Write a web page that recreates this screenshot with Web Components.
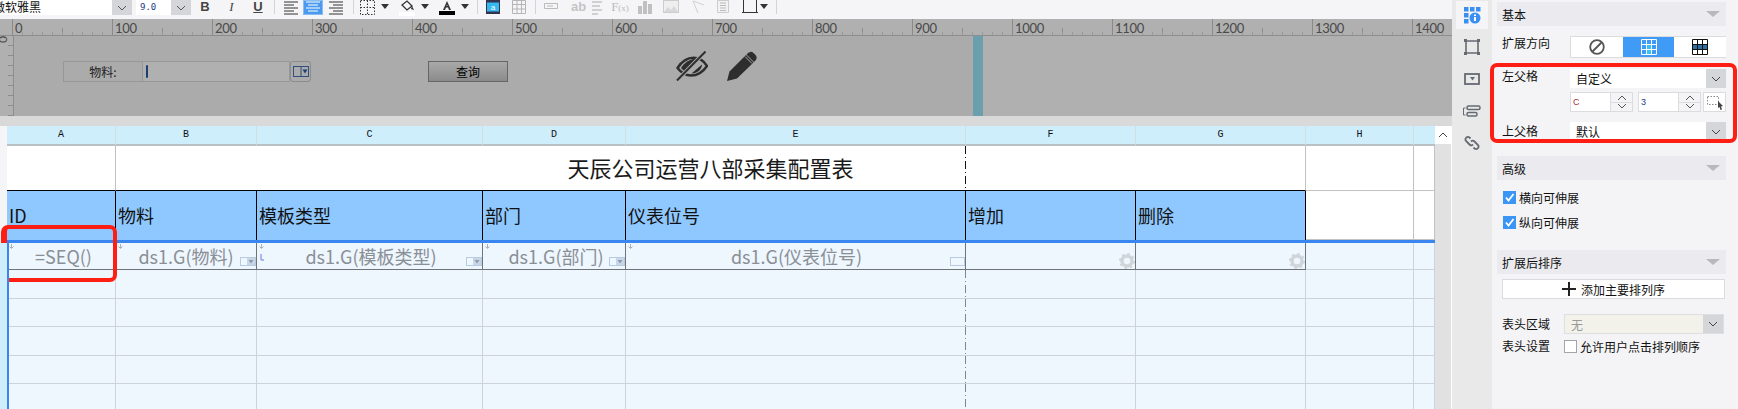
<!DOCTYPE html>
<html lang="zh">
<head>
<meta charset="utf-8">
<title>Report designer</title>
<style>
html,body{margin:0;height:409px;overflow:hidden;background:#f4f4f7;}
body{font-family:"Noto Sans CJK SC","Liberation Sans",sans-serif;font-size:12px;color:#111;}
</style>
</head>
<body>
<fr-app></fr-app>
<script>
const CJK = '"Noto Sans CJK SC","Liberation Sans",sans-serif';

class FrToolbar extends HTMLElement{
    constructor(){
        super();
        this.attachShadow({mode:"open"});
    }
    caret(gap){
        return `<i class="caret" style="margin-left:${gap}px"></i>`;
    }
    sep(gap){
        return `<i class="sep" style="margin-left:${gap}px"></i>`;
    }
    svg(gap,w,body){
        return `<svg style="margin-left:${gap}px" width="${w}" height="16" viewBox="0 0 ${w} 16">${body}</svg>`;
    }
    connectedCallback(){
        this.shadowRoot.innerHTML = `
        <style>
        :host{display:flex;align-items:flex-start;height:19px;background:#f5f5f7;overflow:hidden;font-family:${CJK};}
        .select{display:flex;height:15px;background:#fff;overflow:hidden;}
        .select span{flex:1;line-height:14px;font-size:12px;white-space:nowrap;overflow:hidden;}
        .arrow{display:flex;align-items:center;justify-content:center;width:20px;background:#d5d6da;}
        .btn{font-family:"Liberation Sans",sans-serif;font-size:13px;color:#444;text-align:center;line-height:13px;height:15px;}
        .caret{display:block;width:0;height:0;margin-top:4px;border:4px solid transparent;border-top:5px solid #333;border-bottom:0;}
        .sep{display:block;width:1px;height:14px;background:#d4d4d8;}
        .active{background:#4a9bf0;border:1px solid #88bdf2;box-sizing:border-box;height:15px;width:20px;}
        svg{display:block;flex:none;}
        </style>
        <div class="select" style="width:132px">
            <span style="margin-left:-7px">微软雅黑</span>
            <div class="arrow"><svg width="10" height="6" viewBox="0 0 10 6"><path d="M1 1l4 4 4-4" stroke="#555" fill="none"/></svg></div>
        </div>
        <div class="select" style="width:55px;margin-left:4px">
            <span style="margin-left:4px;font-family:'DejaVu Sans Mono',monospace;font-size:9px;color:#223a8a">9.0</span>
            <div class="arrow"><svg width="10" height="6" viewBox="0 0 10 6"><path d="M1 1l4 4 4-4" stroke="#555" fill="none"/></svg></div>
        </div>
        <b class="btn" style="width:28px">B</b>
        <i class="btn" style="width:25px;font-family:'Liberation Serif',serif">I</i>
        <u class="btn" style="width:28px;font-weight:700">U</u>
        ${this.sep(2)}
        ${this.svg(6,21,`<path d="M3 2h14M3 5h10M3 8h14M3 11h10M3 14h14" stroke="#333" fill="none"/>`)}
        <div class="active" style="margin-left:1px"><svg width="18" height="13" viewBox="0 0 18 13"><path d="M2 1h14M4 4h10M2 7h14M4 10h10" stroke="#fff" fill="none"/></svg></div>
        ${this.svg(2,21,`<path d="M4 2h14M8 5h10M4 8h14M8 11h10M4 14h14" stroke="#333" fill="none"/>`)}
        ${this.sep(7)}
        ${this.svg(6,15,`<path d="M.5.5h14v14H.5zM7.5.5v14M.5 7.5h14" stroke="#333" stroke-dasharray="1.5 1.5" fill="none"/>`)}
        ${this.caret(6)}
        ${this.svg(10,16,`<path d="M3 5l5-4 5 5-5 4z" fill="none" stroke="#333" stroke-width="1.3"/><path d="M13 6l2 4-3-1z" fill="#333"/><rect y="12" width="16" height="4" fill="#fff"/>`)}
        ${this.caret(6)}
        ${this.svg(10,16,`<path d="M8 1l-4 9h2l1-2.500h2l1 2.500h2zM7.500 6L8 4.500 8.500 6z" fill="#333"/><rect y="11" width="16" height="4" fill="#000"/>`)}
        ${this.caret(6)}
        ${this.sep(8)}
        ${this.svg(8,14,`<rect x=".5" y=".5" width="13" height="13" fill="#35b8f0" stroke="#334"/><rect x=".5" y=".5" width="13" height="2" fill="#335"/><rect x=".5" y="11.500" width="13" height="2" fill="#335"/><text x="7" y="10" font-size="8" font-family="Liberation Sans" text-anchor="middle" fill="#fff">a</text>`)}
        ${this.svg(12,14,`<path d="M.5.5h13v13H.5zM.5 4.500h13M.5 9h13M5 .5v13M9.500.5v13" stroke="#b5b5b5" fill="none"/>`)}
        ${this.sep(9)}
        ${this.svg(8,14,`<path d="M.5 3.500h13v5H.5z" stroke="#bbb" fill="none"/><path d="M3 6h6" stroke="#bbb"/>`)}
        <span class="btn" style="margin-left:13px;width:13px;font-weight:700;color:#c4c4c4">ab</span>
        ${this.svg(8,10,`<path d="M0 2h10M0 6h8M0 10h10M0 14h6" stroke="#c4c4c4" stroke-width="1.500" fill="none"/>`)}
        <span class="btn" style="margin-left:9px;width:18px;font-family:'Liberation Serif',serif;color:#bbb;white-space:nowrap">F<small style="font-size:9px">(x)</small></span>
        ${this.svg(9,14,`<path d="M0 6h4v8H0zM5 1h4v13H5zM10 4h4v10h-4z" fill="#c0c0c0"/>`)}
        ${this.svg(11,16,`<rect x=".5" y=".5" width="15" height="12" fill="#eee" stroke="#ccc"/><path d="M1 12l4-5 3 3 3-4 4 6z" fill="#d8d8d8"/>`)}
        ${this.svg(12,13,`<path d="M2 1l5 12M2 1l11 4" stroke="#d0d0d0" fill="none"/>`)}
        ${this.svg(13,12,`<path d="M.5.500h11v12H.5z" fill="#f2f2f2" stroke="#ccc"/><path d="M3 3h6M3 5.500h6M3 8h6M3 10.500h6" stroke="#bbb"/>`)}
        ${this.svg(13,16,`<path d="M1.500 0v13M14.500 0v13M0 12.500h16" stroke="#333" fill="none"/>`)}
        ${this.caret(2)}
        ${this.sep(8)}
        `;
    }
}
customElements.define("fr-toolbar",FrToolbar);

class FrParamPane extends HTMLElement{
    constructor(){
        super();
        this.attachShadow({mode:"open"});
    }
    connectedCallback(){
        const labels = [];
        for(let n = 0; n <= 1400; n += 100) labels.push(`<span>${n}</span>`);
        this.shadowRoot.innerHTML = `
        <style>
        :host{display:block;height:97px;background:#b0b0b0;}
        .ruler{display:flex;height:17px;padding-left:12px;box-sizing:border-box;overflow:hidden;
            border-bottom:1px solid #8d8d8d;
            background-image:
                repeating-linear-gradient(90deg,#9a9a9a 0 1px,transparent 1px 10px),
                repeating-linear-gradient(90deg,#8d8d8d 0 1px,transparent 1px 50px);
            background-size:100% 3px,100% 7px;
            background-position:12px 13px,12px 9px;
            background-repeat:no-repeat;}
        .ruler span{flex:none;width:100px;box-sizing:border-box;border-left:1px solid #8a8a8a;padding-left:2px;
            font:13px/19px "Lato","Liberation Sans",sans-serif;color:#4a4a4a;letter-spacing:-.3px;}
        .canvas{display:flex;height:80px;}
        .vruler{flex:none;width:13px;height:80px;overflow:hidden;border-right:1px solid #8d8d8d;
            background-image:repeating-linear-gradient(180deg,transparent 0 9px,#8d8d8d 9px 10px);
            background-size:5px 100%;background-position:right top;background-repeat:no-repeat;}
        .vruler span{display:block;writing-mode:vertical-rl;margin-left:-3px;height:10px;font:12px/12px "Lato","Liberation Sans",sans-serif;color:#4a4a4a;}
        .stage{display:flex;align-items:flex-start;flex:none;width:959px;background:#ababac;}
        .box{flex:none;height:21px;box-sizing:border-box;margin-top:25px;}
        .label{width:80px;margin-left:49px;border:1px solid #979799;text-align:center;font-size:12px;line-height:19px;color:#222;}
        .input{width:147px;border:1px solid #979799;border-left:0;background:#b0b0b1;padding:3px 0 0 3px;}
        .input i{display:block;width:2px;height:13px;background:#1c3f70;border-radius:1px;}
        .drop{width:21px;border:1px solid #8b8b90;border-radius:3px;display:flex;align-items:center;justify-content:center;}
        .query{width:80px;margin-left:117px;border:1px solid #666;background:linear-gradient(#a9a9a9,#8b8b8b);text-align:center;font-size:12px;line-height:19px;color:#000;}
        svg{display:block;flex:none;}
        .bar{flex:none;align-self:stretch;width:10px;margin-left:216px;background:#6c9fae;}
        .rest{flex:1;}
        </style>
        <div class="ruler">${labels.join("")}</div>
        <div class="canvas">
            <div class="vruler"><span>0</span></div>
            <div class="stage">
                <div class="box label">物料:</div>
                <div class="box input"><i></i></div>
                <div class="box drop">
                    <svg width="16" height="11" viewBox="0 0 16 11"><rect x=".5" y=".5" width="15" height="10" fill="none" stroke="#2f4f7f"/><path d="M8 .5v10" stroke="#2f4f7f"/><path d="M9.500 3.500h5l-2.500 4z" fill="#1f3f78"/></svg>
                </div>
                <div class="box query">查询</div>
                <svg style="margin:15px 0 0 168px" width="32" height="30" viewBox="0 0 32 30">
                    <path d="M1.500 17C6 10 12 6.800 17.500 6.800 23.500 6.800 28 10 31 15 27 21 21 24.500 15 24.500 10 24.500 5 21.500 1.500 17z" fill="none" stroke="#2e2e2e" stroke-width="2.400"/>
                    <path d="M5 17C8 12 13 8 21 7.500L9 21z" fill="#2e2e2e"/>
                    <path d="M15.500 22.500L26 13.500C26 19 20 23 15.500 22.500z" fill="#2e2e2e"/>
                    <path d="M29.500.500L1 29.500" stroke="#ababac" stroke-width="4"/>
                    <path d="M29.500.500L1 29.500" stroke="#2e2e2e" stroke-width="2"/>
                </svg>
                <svg style="margin:15px 0 0 19px" width="30" height="30" viewBox="0 0 30 30">
                    <path d="M0 30l2.500-9.500L19 4l7.500 7.500L10 27.500z" fill="#2e2e2e"/>
                    <path d="M20.500 2.500a4 4 0 0 1 6-.5l2 2a4 4 0 0 1-.5 6l-1 1-7.500-7.500z" fill="#2e2e2e"/>
                    <path d="M18 5.500l7 7" stroke="#ababac" stroke-width="1"/>
                </svg>
                <div class="bar"></div>
            </div>
            <div class="rest"></div>
        </div>
        `;
    }
}
customElements.define("fr-param-pane",FrParamPane);

class FrSheet extends HTMLElement{
    constructor(){
        super();
        this.attachShadow({mode:"open"});
    }
    tag(kind){
        if(kind === "drop") return `<svg class="mini" width="16" height="9" viewBox="0 0 16 9"><rect x=".5" y=".5" width="15" height="8" fill="none" stroke="#b8cbe2"/><rect x="7" y="1" width="8" height="7" fill="#c9d6e6"/><path d="M8.500 3h5L11 6.500z" fill="#8b9bb0"/></svg>`;
        if(kind === "box") return `<svg class="mini" width="15" height="9" viewBox="0 0 15 9"><rect x=".5" y=".5" width="14" height="8" fill="none" stroke="#b8cbe2"/></svg>`;
        if(kind === "gear") return `<svg class="gear" width="16" height="16" viewBox="0 0 16 16"><circle cx="8" cy="8" r="5" fill="none" stroke="#d0d5da" stroke-width="3.400"/><circle cx="8" cy="8" r="7" fill="none" stroke="#d0d5da" stroke-width="2" stroke-dasharray="2.500 3"/></svg>`;
        return "";
    }
    connectedCallback(){
        const cols = ["A","B","C","D","E","F","G","H",""];
        const heads = ["ID","物料","模板类型","部门","仪表位号","增加","删除"];
        const data = [["=SEQ()","",5],["ds1.G(物料)","drop",0],["ds1.G(模板类型)","drop",3],["ds1.G(部门)","drop",4],["ds1.G(仪表位号)","box",2],["","gear",0],["","gear",0]];
        const down = `<svg class="down" width="5" height="5" viewBox="0 0 5 5"><path d="M2.500 0v4M.5 2.500l2 2 2-2" stroke="#a9b0b8" fill="none"/></svg>`;
        let html = `<div class="strip"></div>`;
        cols.forEach(c => html += `<div class="colhead">${c}</div>`);

        html += `<div class="strip"></div><div class="c w"></div>
            <div class="c w title">天辰公司运营八部采集配置表<i class="brk"></i></div>
            <div class="c w"></div><div class="c w"></div>`;

        html += `<div class="strip"></div>`;
        heads.forEach(h => html += `<div class="c head">${h}</div>`);
        html += `<div class="c w ontop"></div><div class="c w ontop"></div>`;

        html += `<div class="strip"></div><div class="rule"></div>`;

        html += `<div class="strip sel first"></div>`;
        data.forEach((d,i) => {
            html += `<div class="c dat" style="padding-left:${d[2]}px">${i < 5 ? down : ""}${i === 2 ? `<svg class="mark" width="5" height="7" viewBox="0 0 5 7"><path d="M1 0v6h3" stroke="#6a78ef" fill="none"/></svg>` : ""}${d[0]}${this.tag(d[1])}</div>`;
        });
        html += `<div class="c blue"></div><div class="c blue"></div>`;

        for(let r = 0; r < 5; r++){
            html += `<div class="strip sel first"></div>`;
            cols.forEach((c,i) => html += `<div class="c blue${i === 4 ? " dash" : ""}"></div>`);
        }

        this.shadowRoot.innerHTML = `
        <style>
        :host{display:flex;height:283px;overflow:hidden;}
        .grid{display:grid;flex:none;
            grid-template-columns:7px 109px 141px 226px 143px 340px 170px 170px 108px 21px;
            grid-template-rows:20px 45px 49px 3px 27px 29px 28px 29px 28px 29px;}
        .strip{background:#f5f5f7;}
        .strip.sel{background:#cfeefb;}
        .strip.first{border-right:2px solid #3a86f0;margin-right:-2px;z-index:1;}
        .colhead{background:#cfeefb;border-right:1px solid #d5dde0;border-bottom:2px solid #b9c1c5;
            text-align:center;font:10px/18px "Liberation Mono","DejaVu Sans Mono",monospace;color:#111;}
        .colhead:nth-child(10){border-right:0;}
        .c{position:relative;box-sizing:border-box;min-width:0;}
        .w{background:#fff;border-right:1px solid #c2c2c2;border-bottom:1px solid #c2c2c2;}
        .title{grid-column:span 6;border-bottom-color:#000;font-size:22px;line-height:43px;text-align:center;color:#1a1a1a;}
        .w:nth-child(12){border-bottom-color:#000;}
        .brk{position:absolute;left:849px;top:0;bottom:0;width:1px;
            background:repeating-linear-gradient(180deg,#111 0 8px,transparent 8px 11px,#111 11px 12px,transparent 12px 15px);}
        .head{background:#8fc8ff;border-right:1px solid #000;font-size:18px;line-height:48px;padding-left:2px;color:#111;white-space:nowrap;overflow:hidden;}
        .rule{grid-column:span 9;background:#3a86f0;}
        .dat{background:#eef6fe;border-right:1px solid #6f7478;border-bottom:1px solid #6f7478;font-size:18px;line-height:26px;text-align:center;color:#8a8f96;white-space:nowrap;}
        .blue{background:#eef6fe;border-right:1px solid #ccd3da;border-bottom:1px solid #ccd3da;}
        .dash{border-right:0;}
        .dash::after{content:"";position:absolute;right:0;top:0;bottom:-1px;width:1px;
            background:repeating-linear-gradient(180deg,#80868e 0 8px,transparent 8px 11px,#80868e 11px 12px,transparent 12px 15px);}
        .down{position:absolute;left:2px;top:1px;}
        .mark{position:absolute;left:3px;top:11px;}
        .mini{position:absolute;right:0;bottom:3px;}
        .gear{position:absolute;right:0;bottom:0;}
        .scroll{flex:none;width:16px;background:#e1e1e1;border-right:1px solid #fff;}
        .scroll div{height:18px;background:#fff;display:flex;align-items:center;justify-content:center;}
        </style>
        <div class="grid">${html}</div>
        <div class="scroll"><div><svg width="10" height="6" viewBox="0 0 10 6"><path d="M1 5l4-4 4 4" stroke="#444" fill="none"/></svg></div></div>
        `;
    }
}
customElements.define("fr-sheet",FrSheet);

class FrSideTabs extends HTMLElement{
    constructor(){
        super();
        this.attachShadow({mode:"open"});
        this.shadowRoot.innerHTML = `
        <style>
        :host{display:flex;flex-direction:column;align-items:center;width:40px;height:409px;background:#e9e9e9;box-sizing:border-box;padding-top:1px;}
        .tab{display:flex;align-items:center;justify-content:center;width:32px;height:28px;margin-bottom:4px;}
        .on{background:#f5f5f7;}
        svg{display:block;}
        </style>
        <div class="tab on"><svg width="18" height="18" viewBox="0 0 18 18" fill="#3b8ff3">
            <rect x="1" y="1" width="4.500" height="4.500"/><rect x="7" y="1" width="4.500" height="4.500"/><rect x="13" y="1" width="4.500" height="4.500"/>
            <rect x="1" y="7" width="4.500" height="4.500"/><rect x="1" y="13" width="4.500" height="4.500"/>
            <circle cx="12" cy="12" r="5.500"/><rect x="11" y="11" width="2" height="4" fill="#fff"/><rect x="11" y="8.500" width="2" height="1.500" fill="#fff"/></svg></div>
        <div class="tab"><svg width="16" height="16" viewBox="0 0 16 16"><path d="M2 2h12v12H2z" fill="none" stroke="#666a72" stroke-width="1.600"/><path d="M0 0h3v3H0zM13 0h3v3h-3zM0 13h3v3H0zM13 13h3v3h-3z" fill="#666a72"/></svg></div>
        <div class="tab"><svg width="16" height="12" viewBox="0 0 16 12"><rect x="1" y="1" width="14" height="10" fill="none" stroke="#666a72" stroke-width="1.800"/><path d="M6 4h5L8.500 7.500z" fill="#666a72"/></svg></div>
        <div class="tab"><svg width="18" height="12" viewBox="0 0 18 12"><path d="M2.500 3H.5v7h2" fill="none" stroke="#666a72"/><rect x="4" y="1" width="13" height="3.500" rx="1.500" fill="none" stroke="#666a72" stroke-width="1.500"/><rect x="4" y="7.500" width="10" height="3.500" rx="1.500" fill="none" stroke="#666a72" stroke-width="1.500"/></svg></div>
        <div class="tab"><svg width="16" height="16" viewBox="0 0 16 16" fill="none" stroke="#666a72" stroke-width="1.800"><path d="M6.500 3.500l-1-1a2.500 2.500 0 0 0-3.500 3.500l3.500 3.500a2.500 2.500 0 0 0 3.500 0"/><path d="M9.500 12.500l1 1a2.500 2.500 0 0 0 3.500-3.500l-3.500-3.500a2.500 2.500 0 0 0-3.500 0"/></svg></div>
        `;
    }
}
customElements.define("fr-side-tabs",FrSideTabs);

class FrSection extends HTMLElement{
    constructor(){
        super();
        this.attachShadow({mode:"open"});
        this.shadowRoot.innerHTML = `
        <style>
        :host{display:flex;align-items:center;justify-content:space-between;height:24px;background:#ebebef;padding:0 10px 0 5px;font-size:12px;color:#111;}
        i{width:0;height:0;border:7px solid transparent;border-top:6px solid #b9b9bd;border-bottom:0;margin-right:-4px;}
        </style>
        <slot></slot><i></i>
        `;
    }
}
customElements.define("fr-section",FrSection);

class FrSelect extends HTMLElement{
    constructor(){
        super();
        this.attachShadow({mode:"open"});
        this.shadowRoot.innerHTML = `
        <style>
        :host{display:flex;flex:1;height:19px;background:#fff;font-size:12px;line-height:19px;overflow:hidden;}
        :host([disabled]){background:#f2f2ea;color:#999;height:20px;box-sizing:border-box;border:1px solid #dedfe0;}
        span{flex:1;padding-left:6px;}
        div{display:flex;align-items:center;justify-content:center;width:20px;background:#d5d6da;}
        </style>
        <span><slot></slot></span>
        <div><svg width="10" height="6" viewBox="0 0 10 6"><path d="M1 1l4 4 4-4" stroke="#444" fill="none"/></svg></div>
        `;
    }
}
customElements.define("fr-select",FrSelect);

class FrSpinner extends HTMLElement{
    constructor(){
        super();
        this.attachShadow({mode:"open"});
        this.shadowRoot.innerHTML = `
        <style>
        :host{display:flex;height:20px;width:63px;box-sizing:border-box;border:1px solid #dcdcdf;background:#fff;font:9px/18px "Liberation Sans",sans-serif;color:#223a8a;}
        span{flex:1;padding-left:2px;}
        div{display:flex;flex-direction:column;width:21px;border-left:1px solid #dcdcdf;background:#f4f4f7;}
        b{flex:1;display:flex;align-items:center;justify-content:center;}
        b+b{border-top:1px solid #dcdcdf;}
        </style>
        <span><slot></slot></span>
        <div>
            <b><svg width="10" height="5" viewBox="0 0 10 5"><path d="M1 5l4-4 4 4" stroke="#555" fill="none"/></svg></b>
            <b><svg width="10" height="5" viewBox="0 0 10 5"><path d="M1 0l4 4 4-4" stroke="#555" fill="none"/></svg></b>
        </div>
        `;
    }
}
customElements.define("fr-spinner",FrSpinner);

class FrCheck extends HTMLElement{
    constructor(){
        super();
        this.attachShadow({mode:"open"});
        this.shadowRoot.innerHTML = `
        <style>
        :host{display:flex;align-items:center;height:14px;font-size:12px;color:#111;white-space:nowrap;}
        svg{display:block;flex:none;margin-right:3px;}
        </style>
        <svg width="13" height="13" viewBox="0 0 13 13"></svg><slot></slot>
        `;
    }
    connectedCallback(){
        this.shadowRoot.querySelector("svg").innerHTML = this.hasAttribute("checked")
            ? `<rect width="13" height="13" fill="#3a95f5"/><path d="M3 6.500l2.500 3L10.500 3" stroke="#fff" stroke-width="1.800" fill="none"/>`
            : `<rect x=".5" y=".5" width="12" height="12" fill="#fff" stroke="#a5a5a8"/>`;
    }
}
customElements.define("fr-check",FrCheck);

class FrPanel extends HTMLElement{
    constructor(){
        super();
        this.attachShadow({mode:"open"});
        this.shadowRoot.innerHTML = `
        <style>
        :host{display:block;width:246px;height:409px;box-sizing:border-box;padding:2px 12px 0 5px;background:#f4f4f7;font-family:${CJK};font-size:12px;color:#111;overflow:hidden;}
        .row{display:flex;align-items:flex-start;padding-left:5px;}
        .row>label{flex:none;width:68px;line-height:14px;}
        .seg{display:flex;flex:1;height:22px;box-sizing:border-box;border:1px solid #dcdcdf;border-right:0;background:#fff;}
        .seg div{flex:1;display:flex;align-items:center;justify-content:center;}
        .seg .on{background:#3f9bf6;}
        svg{display:block;}
        .spins{display:flex;padding-left:73px;margin-top:4px;}
        .pick{flex:1;height:20px;box-sizing:border-box;border:1px solid #dcdcdf;background:#fff;margin-left:2px;display:flex;align-items:center;justify-content:center;}
        .add{display:flex;align-items:center;justify-content:center;gap:5px;margin:5px 1px 0 5px;height:20px;box-sizing:border-box;border:1px solid #dcdcdf;background:#fff;}
        .head{padding-left:5px;}
        .head>label{width:62px;line-height:20px;}
        .row.last>label{line-height:14px;}
        </style>
        <fr-section>基本</fr-section>
        <div class="row" style="margin-top:10px">
            <label>扩展方向</label>
            <div class="seg">
                <div><svg width="16" height="16" viewBox="0 0 16 16" fill="none" stroke="#555" stroke-width="1.800"><circle cx="8" cy="8" r="6.800"/><path d="M3.500 12.500l9-9"/></svg></div>
                <div class="on"><svg width="16" height="16" viewBox="0 0 16 16"><rect x="5.500" y="5.500" width="5" height="5" fill="#35c4f0"/><rect x="5.500" y="10.500" width="5" height="5" fill="#35c4f0"/><path d="M.5.5h15v15H.5zM5.500.5v15M10.500.5v15M.5 5.500h15M.5 10.500h15" fill="none" stroke="#fff"/></svg></div>
                <div><svg width="16" height="16" viewBox="0 0 16 16"><rect x=".5" y="5.500" width="15" height="5" fill="#2f6f9f"/><path d="M.5.5h15v15H.5zM5.500.5v15M10.500.5v15M.5 5.500h15M.5 10.500h15" fill="none" stroke="#111"/></svg></div>
            </div>
        </div>
        <div class="row" style="margin-top:11px"><label>左父格</label><fr-select>自定义</fr-select></div>
        <div class="spins">
            <fr-spinner style="color:#a33">C</fr-spinner>
            <fr-spinner style="margin-left:5px">3</fr-spinner>
            <div class="pick"><svg width="18" height="16" viewBox="0 0 18 16"><rect x="1.500" y="2.500" width="11" height="8" fill="none" stroke="#888" stroke-dasharray="1.500 1.500"/><path d="M12 7l5 5-2 .5 1 3-1.500.500-1-3-1.500 1z" fill="#444"/></svg></div>
        </div>
        <div class="row" style="margin-top:10px"><label style="line-height:18px">上父格</label><fr-select>默认</fr-select></div>
        <fr-section style="margin-top:15px">高级</fr-section>
        <fr-check checked style="margin:10px 0 0 6px">横向可伸展</fr-check>
        <fr-check checked style="margin:11px 0 0 6px">纵向可伸展</fr-check>
        <fr-section style="margin-top:21px">扩展后排序</fr-section>
        <div class="add"><svg width="14" height="14" viewBox="0 0 14 14"><path d="M7 0v14M0 7h14" stroke="#222" stroke-width="2"/></svg>添加主要排列序</div>
        <div class="row head" style="margin-top:15px;padding-right:2px"><label>表头区域</label><fr-select disabled>无</fr-select></div>
        <div class="row head last" style="margin-top:5px"><label>表头设置</label><fr-check>允许用户点击排列顺序</fr-check></div>
        `;
    }
}
customElements.define("fr-panel",FrPanel);

class FrRedBox extends HTMLElement{
    constructor(){
        super();
        this.attachShadow({mode:"open"});
        this.shadowRoot.innerHTML = `
        <style>
        :host{position:absolute;box-sizing:border-box;border:4px solid #ff1e14;border-radius:7px;pointer-events:none;}
        </style>
        `;
    }
}
customElements.define("fr-red-box",FrRedBox);

class FrApp extends HTMLElement{
    constructor(){
        super();
        this.attachShadow({mode:"open"});
        this.shadowRoot.innerHTML = `
        <style>
        :host{display:flex;position:relative;width:1738px;height:409px;overflow:hidden;}
        .main{flex:none;width:1452px;}
        .strip{height:10px;background:#d9d9da;}
        </style>
        <div class="main">
            <fr-toolbar></fr-toolbar>
            <fr-param-pane></fr-param-pane>
            <div class="strip"></div>
            <fr-sheet></fr-sheet>
        </div>
        <fr-side-tabs></fr-side-tabs>
        <fr-panel></fr-panel>
        <fr-red-box style="left:1px;top:225px;width:116px;height:57px;border-left-width:6px"></fr-red-box>
        <fr-red-box style="left:1490px;top:63px;width:247px;height:80px"></fr-red-box>
        `;
    }
}
customElements.define("fr-app",FrApp);
</script>
</body>
</html>
